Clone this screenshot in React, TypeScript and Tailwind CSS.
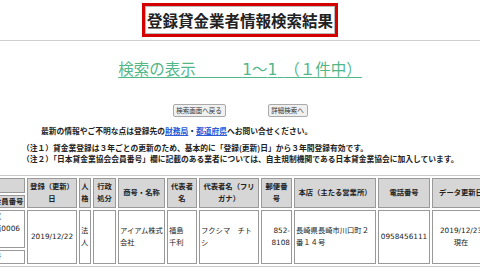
import React from "react";

const th =
  "border border-[#999] bg-[#d6d6d6] px-[1px] py-0 text-[7.3px] leading-[11.5px] font-bold text-[#222] whitespace-nowrap align-middle";
const td =
  "border border-[#999] bg-white px-[1px] py-0 text-[7.3px] leading-[12.3px] font-normal text-[#222] whitespace-nowrap align-middle";

export default function App() {
  return (
    <div className="w-[480px] h-[270px] overflow-hidden bg-white font-['Noto_Sans_CJK_JP',sans-serif] text-[#222]">
      <div className="flex justify-center pt-[3px]">
        <div className="border-[3px] border-[#d40000]">
          <div className="border border-[#bbb] px-[1px] text-[15.5px] font-bold leading-[26px] text-[#222]">
            登録貸金業者情報検索結果
          </div>
        </div>
      </div>
      <div className="mt-[3px] h-px bg-[#cfcfcf]" />
      <div className="mt-[19px] h-[17px] text-center text-[15.5px] leading-[17px] text-[#52b788] underline underline-offset-2 whitespace-nowrap">
        検索の表示　　　<span className="font-['DejaVu_Sans']">1</span>〜
        <span className="font-['DejaVu_Sans']">1</span>
        {"\u00a0\u00a0"}（１件中）
      </div>
      <div className="mt-[27px] flex justify-center gap-[42px]">
        <button className="h-[13px] w-[53px] rounded-[2px] border border-[#aaa] bg-[#f0f0f0] text-[6.5px] leading-[11px] text-[#333]">
          検索画面へ戻る
        </button>
        <button className="h-[13px] w-[40px] rounded-[2px] border border-[#aaa] bg-[#f0f0f0] text-[6.5px] leading-[11px] text-[#333]">
          詳細検索へ
        </button>
      </div>
      <div className="mt-[8px] text-[7.75px] font-bold text-[#222] whitespace-nowrap">
        <p className="pl-[41px] leading-[12px]">
          最新の情報やご不明な点は登録先の
          <span className="text-[#2a5bd7] underline">財務局</span>・
          <span className="text-[#2a5bd7] underline">都道府県</span>
          へお問い合せください。
        </p>
        <p className="mt-[4.5px] pl-[22px] leading-[11.5px]">
          （注１）貸金業登録は３年ごとの更新のため、基本的に「登録(更新)日」から３年間登録有効です。
        </p>
        <p className="pl-[22px] leading-[11.5px]">
          （注２）「日本貸金業協会会員番号」欄に記載のある業者については、自主規制機関である日本貸金業協会に加入しています。
        </p>
      </div>
      <div className="mt-[10px]">
        <table className="ml-[-62px] w-[555px] table-fixed border-separate border-spacing-[2px] border border-[#c8c8c8] font-['DejaVu_Sans','Noto_Sans_CJK_JP',sans-serif]">
          <tbody>
            <tr>
              <th className={th + " h-[15px] w-[84px] text-left"}>登録番号</th>
              <th rowSpan={2} className={th + " w-[50px] text-center"}>
                登録（更新）
                <br />日
              </th>
              <th rowSpan={2} className={th + " w-[12px] text-center"}>
                人<br />格
              </th>
              <th rowSpan={2} className={th + " w-[23px] text-center"}>
                行政
                <br />
                処分
              </th>
              <th rowSpan={2} className={th + " w-[47px] text-center"}>
                商号・名称
              </th>
              <th rowSpan={2} className={th + " w-[30px] text-center"}>
                代表者
                <br />名
              </th>
              <th rowSpan={2} className={th + " w-[60px] text-center"}>
                代表者名（フリ
                <br />
                ガナ）
              </th>
              <th rowSpan={2} className={th + " w-[31px] text-center"}>
                郵便番
                <br />号
              </th>
              <th rowSpan={2} className={th + " w-[82px] text-center"}>
                本店（主たる営業所）
              </th>
              <th rowSpan={2} className={th + " w-[52px] text-center"}>
                電話番号
              </th>
              <th rowSpan={2} className={th + " w-[58px] text-center"}>
                データ更新日
              </th>
            </tr>
            <tr>
              <th className={th + " h-[12px] text-right"}>日本貸金業協会会員番号</th>
            </tr>
            <tr>
              <td className={td + " h-[36px] text-left leading-[12px]"}>
                福岡財務支局長（
                <br />
                長崎県（０１）第0006
                <br />
                （福岡財務支局）
              </td>
              <td rowSpan={2} className={td + " text-center"}>
                2019/12/22
              </td>
              <td rowSpan={2} className={td + " text-left"}>
                法<br />人
              </td>
              <td rowSpan={2} className={td}></td>
              <td rowSpan={2} className={td + " text-left"}>
                アイアム株式
                <br />
                会社
              </td>
              <td rowSpan={2} className={td + " text-left"}>
                福島
                <br />
                千利
              </td>
              <td rowSpan={2} className={td + " text-left"}>
                フクシマ　チト
                <br />シ
              </td>
              <td rowSpan={2} className={td + " text-right"}>
                852-
                <br />
                8108
              </td>
              <td rowSpan={2} className={td + " text-left"}>
                長崎県長崎市川口町２
                <br />
                番１４号
              </td>
              <td rowSpan={2} className={td + " text-center"}>
                0958456111
              </td>
              <td rowSpan={2} className={td + " text-center"}>
                2019/12/23
                <br />
                現在
              </td>
            </tr>
            <tr>
              <td className={td + " h-[13px] text-left"}>第００００００号</td>
            </tr>
          </tbody>
        </table>
      </div>
    </div>
  );
}
